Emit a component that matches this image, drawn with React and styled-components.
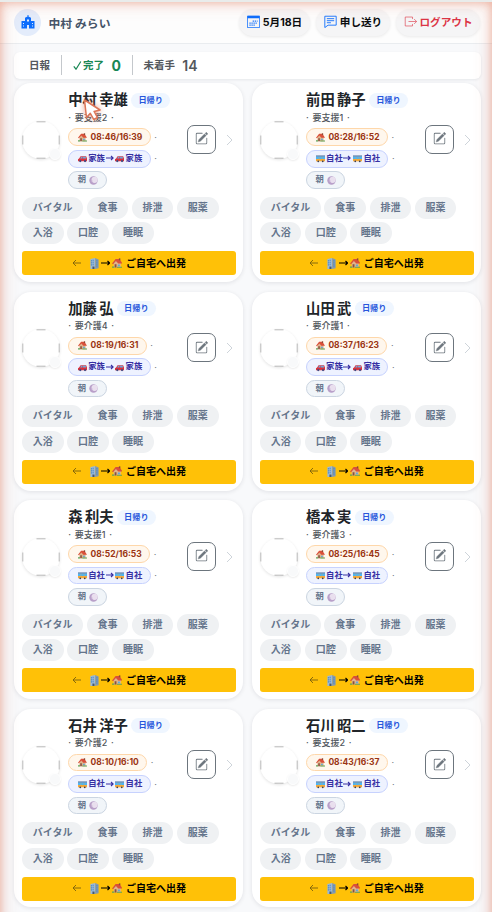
import React from "react";
import styled, { createGlobalStyle } from "styled-components";

const Global = createGlobalStyle`
  * { box-sizing: border-box; }
  html, body { margin: 0; padding: 0; height: 912px; overflow: hidden; }
  body { background: #f8f9fb; font-family: Inter, "Noto Sans CJK JP", sans-serif; }
  button { font: inherit; margin: 0; border: 0; }
`;

const Screen = styled.div`
  position: relative;
  width: 492px;
  height: 912px;
  overflow: hidden;
  border-top: 2px solid #e9eceb;
`;

const EdgeGlow = styled.div`
  position: absolute;
  inset: 0 0 -20px;
  pointer-events: none;
  box-shadow: inset 0 0 8px rgba(222, 110, 77, 0.42), inset 0 0 18px rgba(222, 110, 77, 0.3);
`;

const Header = styled.header`
  display: flex;
  align-items: center;
  height: 42px;
  padding: 0 12px 0 14px;
  background: #fdfdfd;
  border-bottom: 1px solid #e9ecef;
`;

const Logo = styled.div`
  display: flex;
  align-items: center;
  justify-content: center;
  width: 27px;
  height: 27px;
  padding-bottom: 2px;
  border-radius: 50%;
  background: #e3ecfb;
`;

const UserName = styled.div`
  flex: 1;
  padding: 2px 0 0 7.5px;
  font-size: 11.8px;
  line-height: 18px;
  font-weight: 600;
  color: #475569;
`;

const Actions = styled.div`
  display: flex;
  gap: 6px;
  margin-top: -1px;
`;

const Action = styled.button`
  display: flex;
  align-items: center;
  justify-content: center;
  gap: 3px;
  width: ${(p) => p.$w}px;
  height: 27px;
  padding: 0 0 1px;
  border-radius: 14px;
  background: #f5f5f6;
  box-shadow: 0 1px 3px rgba(0, 0, 0, 0.08);
  font-size: 10.6px;
  font-weight: 700;
  white-space: nowrap;
  color: ${(p) => (p.$danger ? "#dc3545" : "#0b0d0f")};

  svg { margin-bottom: 1px; }
`;

const Summary = styled.section`
  display: flex;
  align-items: center;
  height: 27px;
  margin: 8px 11px 4.4px 14px;
  padding: 0 0 1px 15px;
  border-radius: 6px;
  background: #fff;
  box-shadow: 0 1px 3px rgba(15, 23, 42, 0.08);
  font-size: 10.5px;
`;

const Stat = styled.div`
  display: flex;
  align-items: center;
  height: 20px;
  padding: ${(p) => (p.$first ? "0 11px 0 0" : "0 11px 0 10.5px")};
  border-left: ${(p) => (p.$first ? "0" : "1px solid #c4c8cc")};
  font-weight: ${(p) => (p.$done ? 700 : 600)};
  color: ${(p) => (p.$done ? "#198754" : "#54585d")};

  svg { margin-right: 1.6px; }
`;

const Label = styled.span`
  padding-bottom: 2px;
`;

const Count = styled.b`
  margin-left: 7.4px;
  font-size: 14px;
  font-weight: ${(p) => (p.$strong ? 700 : 600)};
`;

const Grid = styled.main`
  display: grid;
  grid-template-columns: 229px 229px;
  grid-auto-rows: 198.7px;
  gap: 9.75px 8.8px;
  padding-left: 14px;
`;

const Card = styled.article`
  padding: 8.6px 7.3px 0 8px;
  border-radius: 17px;
  background: #fff;
  box-shadow: 0 1px 4px rgba(15, 23, 42, 0.1);
`;

const Profile = styled.div`
  display: flex;
  align-items: center;
  height: 96.6px;
`;

const Avatar = styled.div`
  position: relative;
  flex: none;
  width: 38px;
  height: 38px;
  margin: 0 8.3px 1px 0;
  border-radius: 50%;
  background: #fff;
  box-shadow: 0 1px 3px rgba(0, 0, 0, 0.11);

  svg { display: block; }
`;

const Presence = styled.i`
  position: absolute;
  right: -1px;
  bottom: -1px;
  width: 12px;
  height: 12px;
  border: 1px solid #fff;
  border-radius: 50%;
  background: #f8f9fa;
  box-shadow: 0 1px 2px rgba(0, 0, 0, 0.08);
`;

const Info = styled.div`
  flex: 1;
  height: 96.6px;
`;

const NameLine = styled.div`
  display: flex;
  align-items: center;
  height: 17px;
  white-space: nowrap;
`;

const Name = styled.h2`
  margin: -1px 0 0;
  font-size: 14.3px;
  line-height: 17px;
  font-weight: 700;
  word-spacing: -1.1px;
  color: #212529;
`;

const StayTag = styled.span`
  width: 39px;
  height: 15px;
  margin-left: 3.4px;
  border-radius: 8px;
  background: #eff6ff;
  font-size: 8.2px;
  line-height: 15px;
  font-weight: 700;
  text-align: center;
  color: #2756dc;
`;

const Level = styled.div`
  height: 19.5px;
  font-size: 9px;
  line-height: 18px;
  font-weight: 500;
  word-spacing: 1.3px;
  color: #50565c;
`;

const tones = {
  time: ["#fff7ed", "#fed7aa", "#9a3412"],
  route: ["#eef2ff", "#c7d2fe", "#3730a3"],
  slot: ["#f1f5f9", "#cbd5e1", "#64748b"],
};

const BadgeLine = styled.div`
  display: flex;
  align-items: center;
  height: 17.6px;
  margin-bottom: 3.9px;
  font-size: 9px;
  color: #6c757d;
`;

const Badge = styled.span`
  display: flex;
  align-items: center;
  height: 17.6px;
  margin-right: 3.6px;
  padding: 0 7.4px 0 8.5px;
  border: 1px solid ${(p) => tones[p.$tone][1]};
  border-radius: 9px;
  background: ${(p) => tones[p.$tone][0]};
  font-size: ${(p) => (p.$tone === "time" ? 8.5 : 8.3)}px;
  line-height: 15px;
  font-weight: 700;
  white-space: nowrap;
  color: ${(p) => tones[p.$tone][2]};
`;

const BadgeText = styled.span`
  margin-bottom: 1px;
`;

const Emoji = styled.svg`
  flex: none;
  width: ${(p) => p.$size || 9}px;
  height: ${(p) => p.$size || 9}px;
  margin: 0 ${(p) => p.$gap || 0}px 0 ${(p) => p.$lead || 0}px;
`;

const LongArrow = styled.svg`
  flex: none;
  width: ${(p) => p.$w}px;
  height: 6px;
  margin: 0 .6px 1px;
`;

const EditButton = styled.button`
  flex: none;
  display: flex;
  align-items: center;
  justify-content: center;
  width: 29px;
  height: 29px;
  margin: 0 0 1.6px;
  padding: 0 0 1px;
  border: 1px solid #6c757d;
  border-radius: 7px;
  background: #fff;
`;

const Chevron = styled.svg`
  flex: none;
  width: 7px;
  height: 12px;
  margin: 0 3px 1px 10px;
`;

const Chips = styled.div`
  display: flex;
  flex-wrap: wrap;
  gap: 3.7px 3.4px;
  margin-top: 8.2px;
`;

const Chip = styled.span`
  width: ${(p) => (p.$wide ? 61.3 : 41.7)}px;
  height: 22px;
  border-radius: 11px;
  background: #eff1f3;
  font-size: 10px;
  line-height: 21.5px;
  font-weight: 700;
  text-align: center;
  color: #64748b;
`;

const Depart = styled.button`
  display: flex;
  align-items: center;
  justify-content: center;
  width: 100%;
  height: 24px;
  margin-top: 6.8px;
  padding: 0;
  border-radius: 3px;
  background: #ffc107;
  font-size: 10px;
  font-weight: 700;
  color: #000;
`;

const BackArrow = styled.svg`
  width: 9px;
  height: 8px;
  margin: 0 8px 1px 0;
`;

const Pointer = styled.svg`
  position: absolute;
  left: 80px;
  top: 94px;
  width: 26px;
  height: 28px;
  overflow: visible;
  filter: drop-shadow(0 0 3px rgba(226, 110, 77, 0.6));
`;

const House = (p) => (
  <Emoji viewBox="0 0 16 16" {...p}>
    <path d="M2.500 7 6 3l7.500 4.500v7h-11z" fill="#e0b48c" />
    <path d="M0 8.500 5.500 1.500h6L16 8.500H9.500L6 4.500 1.500 9.500z" fill="#d9503a" />
    <path d="M10.500.5h2.200v3h-2.200z" fill="#8d4a36" />
    <path d="M4 9.500h2.800v5H4z" fill="#87533e" />
    <path d="M9 10h3v2.500H9z" fill="#5aa9de" />
    <path d="M0 13h3.500v2H0zM7.500 13.500H16V15H7.500z" fill="#5da257" />
  </Emoji>
);

const Car = (p) => (
  <Emoji viewBox="0 0 16 16" {...p}>
    <path d="M0 9.500 2 8l2.500-4h10L16 8v5H0z" fill="#d8323d" />
    <path d="M3.800 8 5.500 5H8v3zM9 5h4.500l1 3H9z" fill="#6fa8dd" />
    <circle cx="4" cy="12.500" r="2" fill="#3e4a82" />
    <circle cx="12.500" cy="12.500" r="2" fill="#3e4a82" />
  </Emoji>
);

const Bus = (p) => (
  <Emoji viewBox="0 0 16 16" {...p}>
    <path d="M0 3h16v10H0z" fill="#f5a93a" />
    <path d="M0 2.500h16V5H0z" fill="#5a8fd0" />
    <path d="M0 5h5v4H0zM5.700 5h4.600v4H5.700zM11 5h5v4h-5z" fill="#4bb4f5" />
    <circle cx="4" cy="13" r="1.600" fill="#3e4152" />
    <circle cx="12" cy="13" r="1.600" fill="#3e4152" />
  </Emoji>
);

const Building = (p) => (
  <Emoji viewBox="0 0 16 16" {...p}>
    <path d="M2 1.500 9 0v16H2z" fill="#9cb9d6" />
    <path d="m9 0 5 2v13l-5 1z" fill="#8199b3" />
    <path d="M3.500 3v9M6 2.500V12M11.500 3v10" fill="none" stroke="#3f86c8" strokeWidth="1.300" strokeDasharray="2 1" />
    <path d="M5 12.500h3V16H5z" fill="#49596b" />
  </Emoji>
);

const Moon = (p) => (
  <Emoji viewBox="0 0 16 16" {...p}>
    <circle cx="8" cy="8" r="7.500" fill="#b9a0c9" />
    <circle cx="10" cy="6.800" r="5.500" fill="#e9dfee" />
    <circle cx="5" cy="9" r="1.400" fill="#c9b3d6" />
  </Emoji>
);

const RightArrow = ({ w, color }) => (
  <LongArrow $w={w} viewBox={`0 0 ${w} 6`} fill="none" stroke={color} strokeWidth="1.100">
    <path d={`M0 3h${w - 1}M${w - 3} 1 ${w - 0.9} 3 ${w - 3} 5`} />
  </LongArrow>
);

const people = [
  ["中村 幸雄", "要支援2", "08:46/16:39", "家族"],
  ["前田 静子", "要支援1", "08:28/16:52", "自社"],
  ["加藤 弘", "要介護4", "08:19/16:31", "家族"],
  ["山田 武", "要介護1", "08:37/16:23", "家族"],
  ["森 利夫", "要支援1", "08:52/16:53", "自社"],
  ["橋本 実", "要介護3", "08:25/16:45", "自社"],
  ["石井 洋子", "要介護2", "08:10/16:10", "自社"],
  ["石川 昭二", "要支援2", "08:43/16:37", "自社"],
];

const tasks = ["バイタル", "食事", "排泄", "服薬", "入浴", "口腔", "睡眠"];

function PersonCard({ person: [name, level, time, ride] }) {
  const Vehicle = ride === "家族" ? Car : Bus;
  return (
    <Card>
      <Profile>
        <Avatar>
          <svg width="38" height="38" viewBox="0 0 38 38" fill="none" stroke="#9a9a9a" strokeWidth="0.7">
            <path d="M14.500 .8h9M14.500 37.200h9M.8 14.500v9M37.200 14.500v9" />
          </svg>
          <Presence />
        </Avatar>
        <Info>
          <NameLine><Name>{name}</Name><StayTag>日帰り</StayTag></NameLine>
          <Level>· {level} ·</Level>
          <BadgeLine>
            <Badge $tone="time"><House $gap={3.8} />{time}</Badge>·
          </BadgeLine>
          <BadgeLine>
            <Badge $tone="route">
              <Vehicle $gap={1.5} />
              <BadgeText>{ride}</BadgeText>
              <RightArrow w={8} color="#3730a3" />
              <Vehicle $lead={1} $gap={1.5} />
              <BadgeText>{ride}</BadgeText>
            </Badge>·
          </BadgeLine>
          <BadgeLine>
            <Badge $tone="slot"><BadgeText>朝</BadgeText><Moon $lead={3} $gap={0.6} /></Badge>
          </BadgeLine>
        </Info>
        <EditButton aria-label="編集">
          <svg width="13" height="13" viewBox="0 0 16 16" fill="#6c757d">
            <path d="M15.500 1.900a.5.5 0 0 1 0 .7l-1 1.100-2-2 1-1.100a.5.5 0 0 1 .7 0zm-1.800 2.500-2-2L4.900 9.200a.5.5 0 0 0-.1.200l-.8 2.400a.2.200 0 0 0 .3.300l2.400-.8a.5.5 0 0 0 .2-.1z" stroke="#6c757d" strokeWidth=".5" />
            <path d="M1 13.500A1.500 1.500 0 0 0 2.500 15h11a1.500 1.500 0 0 0 1.500-1.500v-6a.5.5 0 0 0-1 0v6a.5.5 0 0 1-.5.5h-11a.5.5 0 0 1-.5-.5v-11a.5.5 0 0 1 .5-.5H9a.5.5 0 0 0 0-1H2.500A1.500 1.500 0 0 0 1 2.500z" />
          </svg>
        </EditButton>
        <Chevron viewBox="0 0 7 12" fill="none" stroke="#ced4da"><path d="m1 1 5 5-5 5" /></Chevron>
      </Profile>
      <Chips>{tasks.map((t) => <Chip key={t} $wide={t.length > 2}>{t}</Chip>)}</Chips>
      <Depart>
        <BackArrow viewBox="0 0 9 8" fill="none" stroke="#7b610d" strokeWidth="0.9"><path d="M9 4H1M4 1 1 4l3 3" /></BackArrow>
        <Building $size={11} $gap={0.5} />
        <RightArrow w={9.5} color="#000" />
        <House $size={10.5} $lead={1} $gap={3.7} />
        <Label>ご自宅へ出発</Label>
      </Depart>
    </Card>
  );
}

export default function App() {
  return (
    <Screen>
      <Global />
      <Header>
        <Logo>
          <svg width="14" height="14" viewBox="0 0 14 14" fill="#0d6efd">
            <path fillRule="evenodd" d="M6.500 0h1v1.500l2.500 1.200V6h3.500v7.500H8V10H6v3.500H.5V6H4V2.700l2.500-1.200zM6 4.500v2h2v-2zM2 8v1h1V8zm9 0v1h1V8zM2 10.500v1h1v-1zm9 0v1h1v-1z" />
          </svg>
        </Logo>
        <UserName>中村 みらい</UserName>
        <Actions>
          <Action $w={71}>
            <svg width="13" height="13" viewBox="0 0 16 16" fill="none" stroke="#0d6efd">
              <path d="M.5 1.500h15v14H.5z" /><path d="M.5 2.500h15" strokeWidth="3" />
              <path d="M7 7.500h6M3 10h10M3 12.500h7" strokeWidth="1.400" strokeDasharray="1.500 1" />
            </svg>
            5月18日
          </Action>
          <Action $w={74}>
            <svg width="13" height="13" viewBox="0 0 16 16" fill="none" stroke="#0d6efd" strokeWidth="1.100">
              <path d="M1 1.500h14v11H5l-4 3zM3.500 4.500h9M3.500 7h9M3.500 9.500h5" />
            </svg>
            申し送り
          </Action>
          <Action $w={84} $danger>
            <svg width="13" height="13" viewBox="0 0 16 16" fill="none" stroke="#dc3545" strokeOpacity=".75">
              <path d="M10.500 5V2.500h-9v11h9V11M5.500 8h10M12.500 5l3 3-3 3" />
            </svg>
            ログアウト
          </Action>
        </Actions>
      </Header>
      <Summary>
        <Stat $first><Label>日報</Label></Stat>
        <Stat $done>
          <svg width="9" height="9" viewBox="0 0 9 9" fill="none" stroke="#198754" strokeWidth="1.200"><path d="m.8 5.300 2.200 2.900L7.800.5" /></svg>
          <Label>完了</Label><Count $strong>0</Count>
        </Stat>
        <Stat><Label>未着手</Label><Count>14</Count></Stat>
      </Summary>
      <Grid>{people.map((p) => <PersonCard key={p[0]} person={p} />)}</Grid>
      <EdgeGlow />
      <Pointer viewBox="0 0 26 28">
        <path d="m4.500 4 2 17.500 3.800-4.200 3.500 6.200 3.600-2-3.300-6 6-1.500z" fill="#fff" stroke="#dc7557" strokeWidth="1.500" strokeLinejoin="round" />
      </Pointer>
    </Screen>
  );
}
